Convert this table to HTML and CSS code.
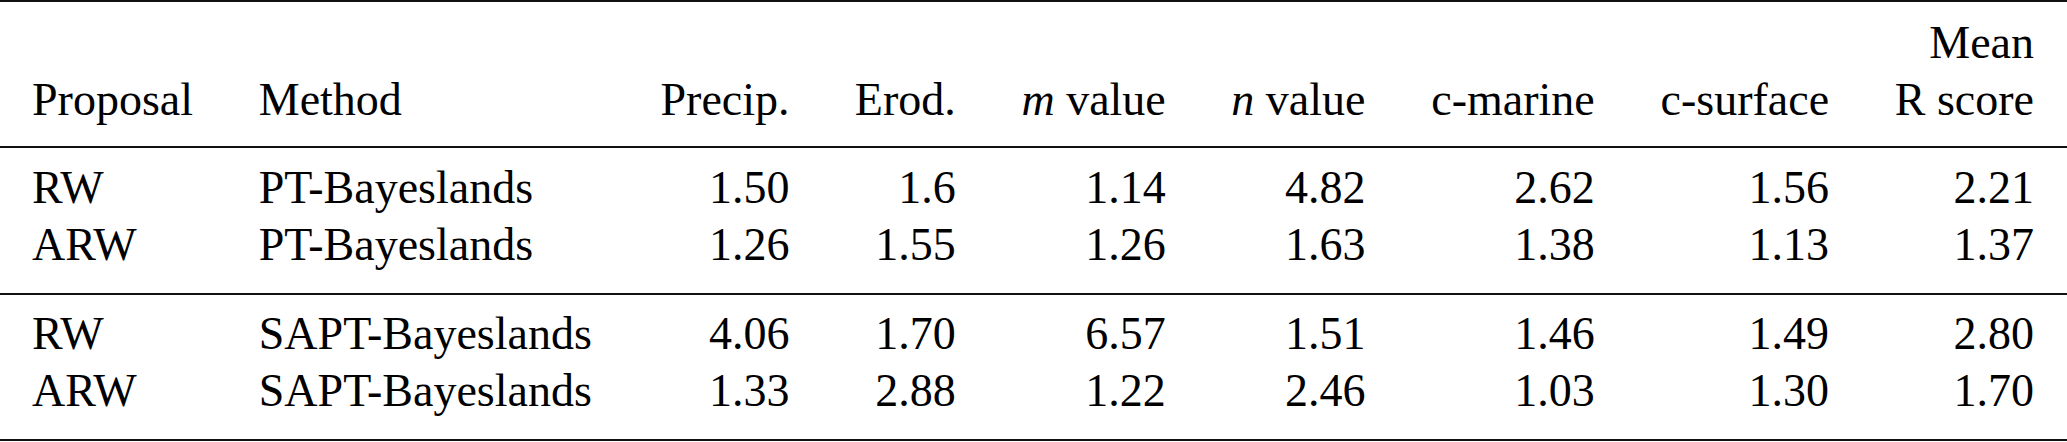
FILE: index.html
```html
<!DOCTYPE html>
<html lang="en">
<head>
  <meta charset="UTF-8">
  <meta name="viewport" content="width=device-width, initial-scale=1.0">
  <title>Proposal comparison</title>
  <link rel="stylesheet" href="styles.css">
</head>
<body>
  <table class="results">
    <thead>
      <tr>
        <th class="text">Proposal</th>
        <th class="text">Method</th>
        <th>Precip.</th>
        <th>Erod.</th>
        <th><i>m</i> value</th>
        <th><i>n</i> value</th>
        <th>c-marine</th>
        <th>c-surface</th>
        <th>Mean<br>R score</th>
      </tr>
    </thead>
    <tbody class="group">
      <tr>
        <td class="text">RW</td>
        <td class="text">PT-Bayeslands</td>
        <td>1.50</td>
        <td>1.6</td>
        <td>1.14</td>
        <td>4.82</td>
        <td>2.62</td>
        <td>1.56</td>
        <td>2.21</td>
      </tr>
      <tr>
        <td class="text">ARW</td>
        <td class="text">PT-Bayeslands</td>
        <td>1.26</td>
        <td>1.55</td>
        <td>1.26</td>
        <td>1.63</td>
        <td>1.38</td>
        <td>1.13</td>
        <td>1.37</td>
      </tr>
    </tbody>
    <tbody class="group">
      <tr>
        <td class="text">RW</td>
        <td class="text">SAPT-Bayeslands</td>
        <td>4.06</td>
        <td>1.70</td>
        <td>6.57</td>
        <td>1.51</td>
        <td>1.46</td>
        <td>1.49</td>
        <td>2.80</td>
      </tr>
      <tr>
        <td class="text">ARW</td>
        <td class="text">SAPT-Bayeslands</td>
        <td>1.33</td>
        <td>2.88</td>
        <td>1.22</td>
        <td>2.46</td>
        <td>1.03</td>
        <td>1.30</td>
        <td>1.70</td>
      </tr>
    </tbody>
  </table>
</body>
</html>
```

FILE: styles.css
```css
body {
  margin: 0;
  background-color: #ffffff;
  color: #000000;
  font-family: "Times New Roman", Tinos, "Nimbus Roman", "Liberation Serif", serif;
}

.results {
  width: 100%;
  border-collapse: separate;
  border-spacing: 0;
  font-size: 46px;
  line-height: 57px;
}

.results th,
.results td {
  padding: 0 32px;
  text-align: right;
  white-space: nowrap;
  font-weight: normal;
}

.results th:last-child,
.results td:last-child {
  padding-right: 33px;
}

.results .text {
  text-align: left;
}

/* header: top rule and header rule */
.results th {
  vertical-align: bottom;
  padding-top: 12px;
  padding-bottom: 18px;
  border-top: 2px solid #111;
  border-bottom: 2px solid #111;
}

.results td {
  vertical-align: baseline;
}

.group tr:first-child td {
  padding-top: 11px;
}

.group tr:last-child td {
  padding-bottom: 20px;
}

/* midrule between groups */
.group + .group tr:first-child td {
  border-top: 2px solid #111;
  padding-top: 10px;
}

/* bottom rule */
.group:last-child tr:last-child td {
  border-bottom: 2px solid #111;
}
```
